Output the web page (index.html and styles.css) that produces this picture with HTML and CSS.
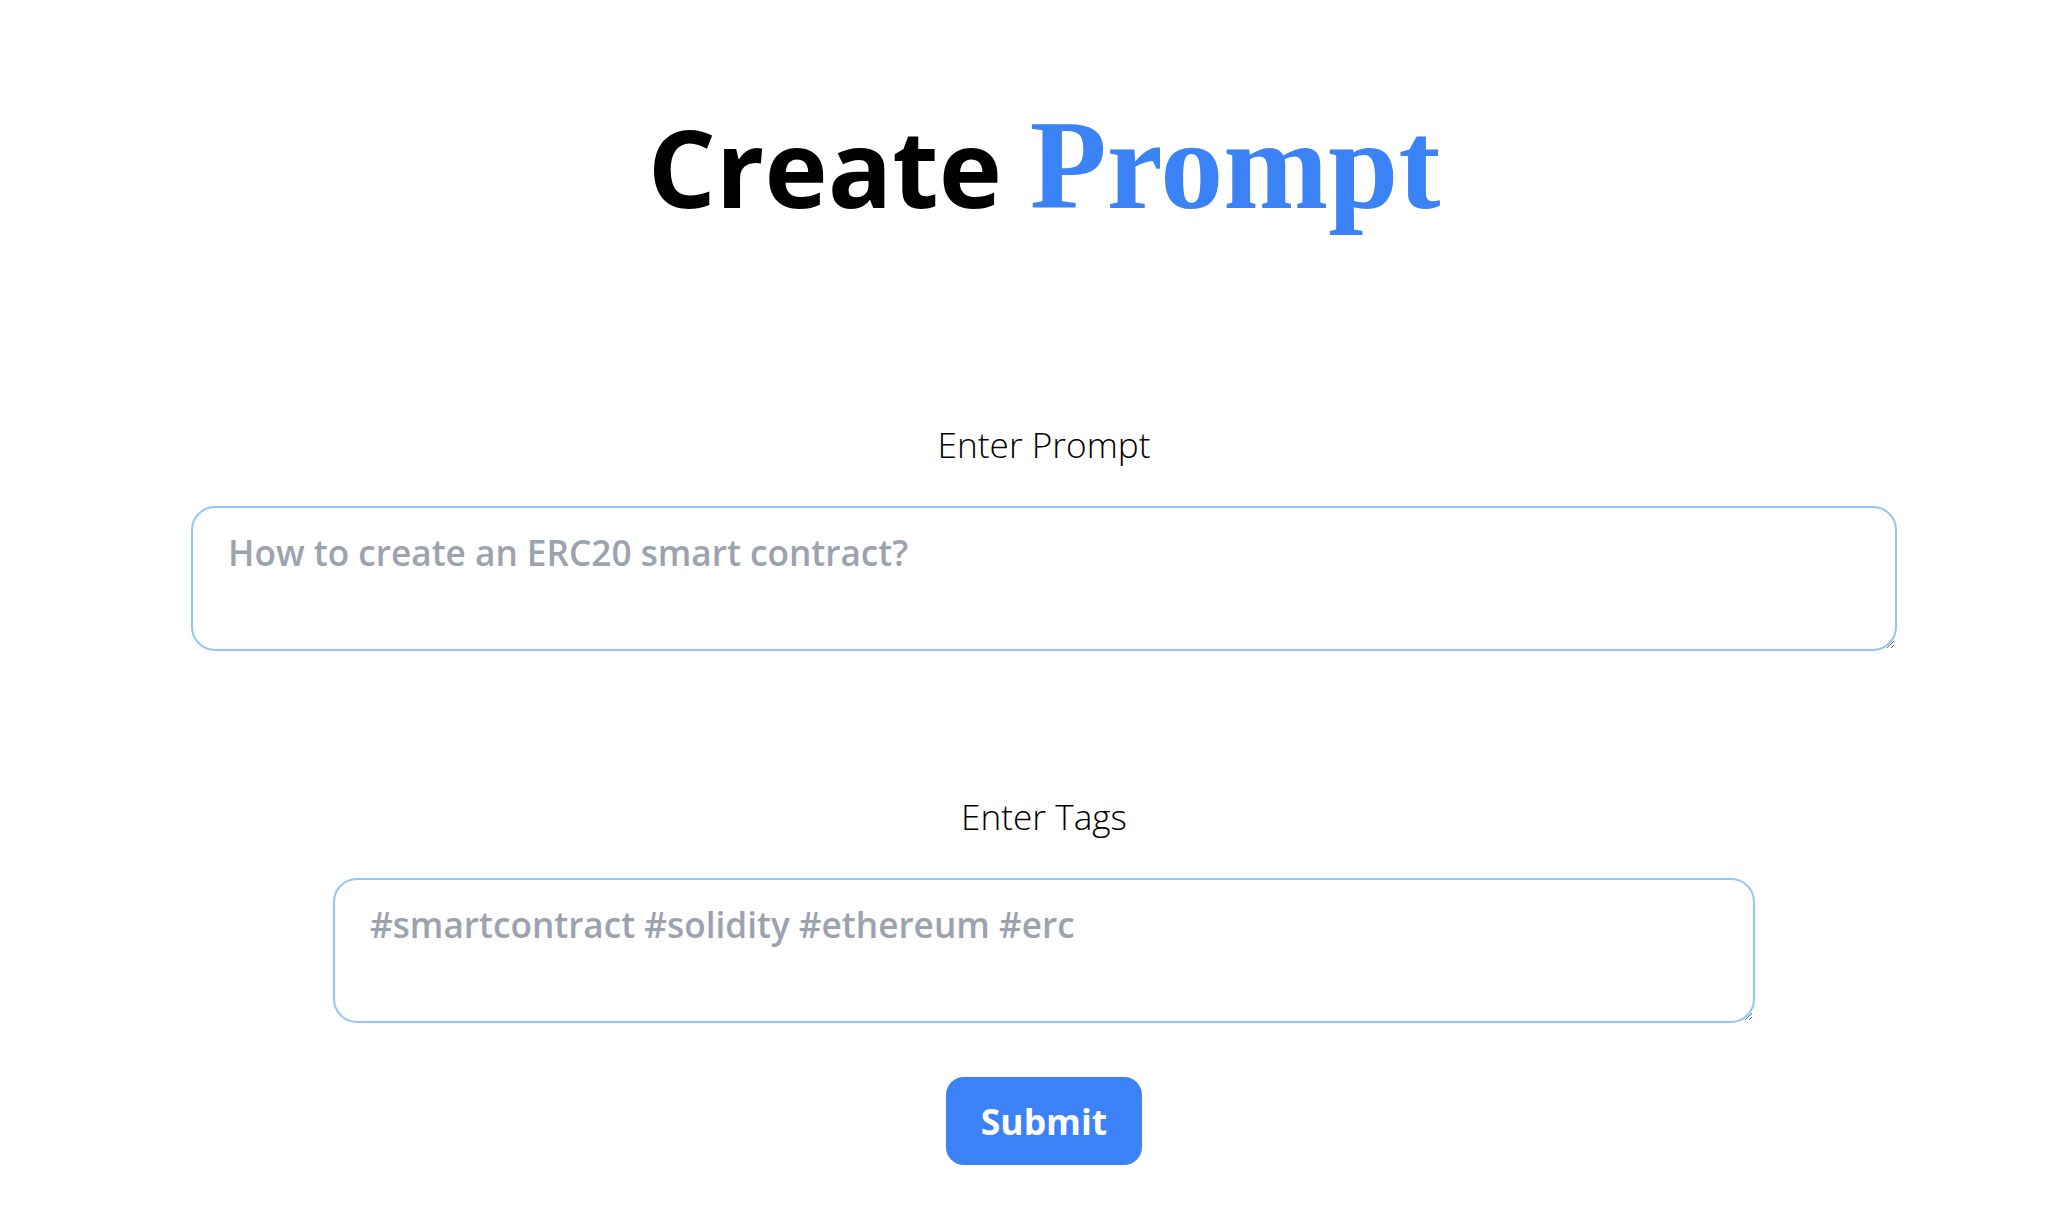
FILE: index.html
```html
<!DOCTYPE html>
<html lang="en">
<head>
<meta charset="utf-8">
<title>Create Prompt</title>
<link rel="stylesheet" href="styles.css">
</head>
<body>
<main class="page">
  <h1 class="title">Create <span class="accent">Prompt</span></h1>
  <form class="form">
    <label class="label" for="prompt">Enter Prompt</label>
    <textarea id="prompt" class="field field-wide" placeholder="How to create an ERC20 smart contract?"></textarea>
    <label class="label label-tags" for="tags">Enter Tags</label>
    <textarea id="tags" class="field field-narrow" placeholder="#smartcontract #solidity #ethereum #erc"></textarea>
    <button type="button" class="submit">Submit</button>
  </form>
</main>
</body>
</html>
```
FILE: styles.css
```css
html, body {
  margin: 0;
  padding: 0;
  background: #ffffff;
}

.page {
  font-family: "Open Sans", "Noto Sans", sans-serif;
  display: flex;
  flex-direction: column;
  align-items: center;
  padding: 103px 0 60px 23px;
  color: #000;
}

.title {
  margin: 0;
  font-size: 107px;
  font-weight: 700;
  line-height: 1;
  white-space: nowrap;
}

.accent {
  font-family: "Liberation Serif", "Times New Roman", serif;
  font-size: 126px;
  font-weight: 700;
  color: #3b82f6;
}

.form {
  display: flex;
  flex-direction: column;
  align-items: center;
  margin-top: 190px;
  width: 1706px;
}

.label {
  font-size: 35.2px;
  font-weight: 300;
  line-height: 51px;
  color: #000;
}

.label-tags {
  margin-top: 140px;
}

.field {
  box-sizing: border-box;
  margin-top: 36px;
  height: 145px;
  border: 2px solid #93c5fd;
  border-radius: 24px;
  padding: 18px 35px 16px;
  font-family: "Open Sans", "Noto Sans", sans-serif;
  font-size: 35.2px;
  font-weight: 600;
  line-height: 1.5;
  color: #374151;
  background: #fff;
  outline: none;
}

.field::placeholder {
  color: #9ca3af;
  opacity: 1;
}

.field-wide {
  width: 1706px;
}

.field-narrow {
  width: 1422px;
}

.submit {
  margin-top: 54px;
  box-sizing: border-box;
  width: 196px;
  height: 88px;
  border: none;
  border-radius: 18px;
  background: #3b82f6;
  color: #fff;
  font-family: "Open Sans", "Noto Sans", sans-serif;
  font-size: 35.5px;
  font-weight: 700;
  cursor: pointer;
}
```
